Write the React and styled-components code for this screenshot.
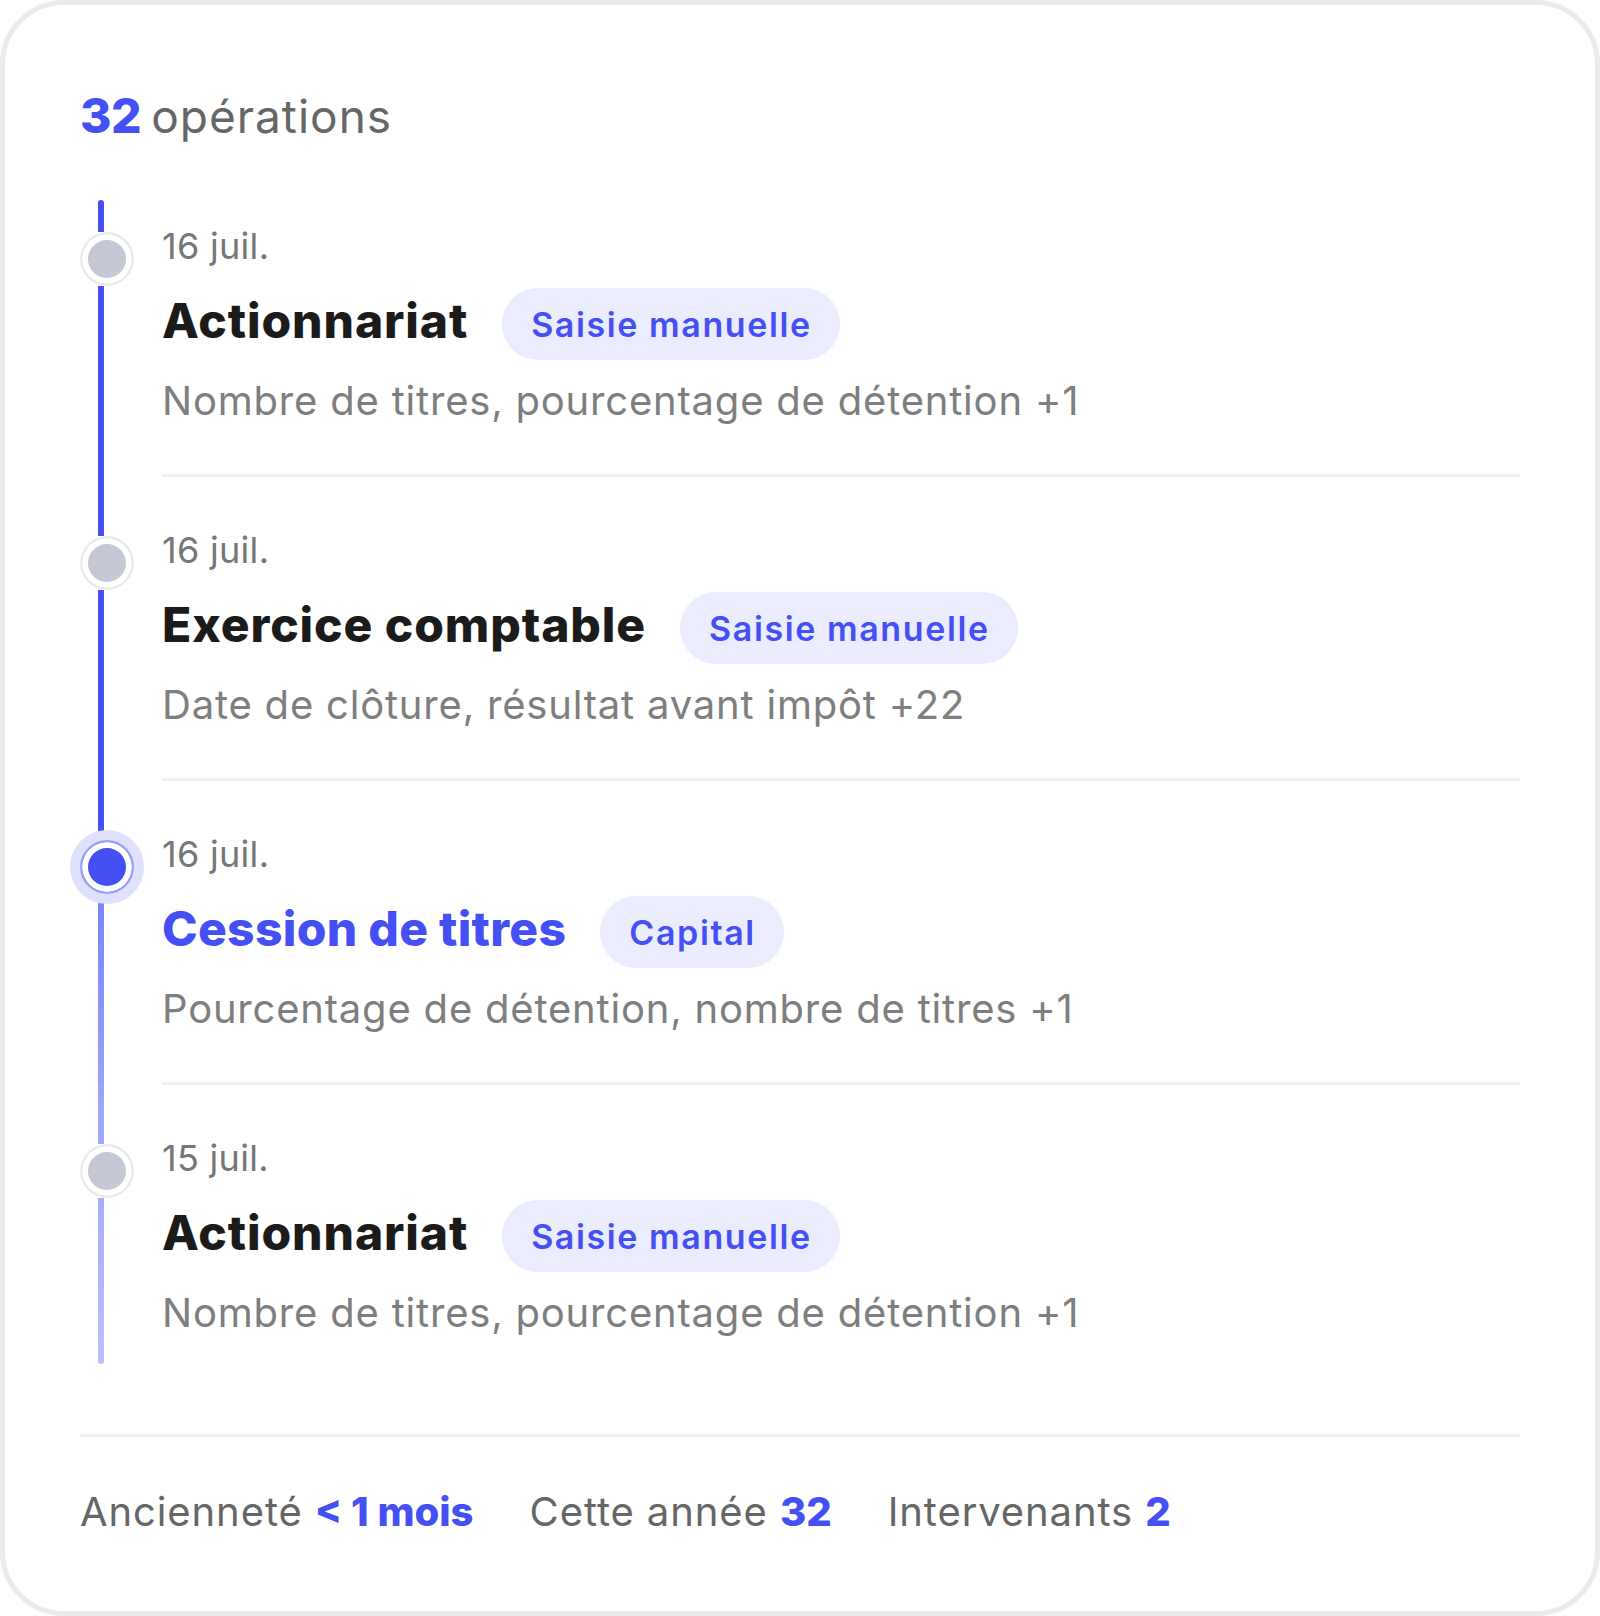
import React from "react";
import styled, { createGlobalStyle } from "styled-components";

const GlobalStyle = createGlobalStyle`
  * {
    box-sizing: border-box;
  }
  body {
    margin: 0;
    background: #ffffff;
    font-family: Inter, "Noto Sans", sans-serif;
  }
`;

const Card = styled.section`
  width: 1600px;
  height: 1616px;
  padding: 83px 75px 0 75px;
  border: 5px solid #eaebed;
  border-radius: 64px;
  background: #ffffff;
`;

const Heading = styled.h2`
  margin: 0;
  font-size: 46px;
  line-height: 56px;
  font-weight: 400;
  color: #666666;
  letter-spacing: 1px;
`;

const Count = styled.span`
  font-size: 48px;
  font-weight: 800;
  color: #4450f4;
  letter-spacing: -0.5px;
  margin-right: 10px;
`;

const Timeline = styled.div`
  margin-top: 56px;
`;

const Row = styled.div`
  display: grid;
  grid-template-columns: 82px 1fr;
`;

const Rail = styled.div`
  display: flex;
  flex-direction: column;
`;

const Segment = styled.div`
  width: 6px;
  margin-left: 18px;
  height: ${(p) => (p.$height ? `${p.$height}px` : "auto")};
  flex: ${(p) => (p.$height ? "none" : 1)};
  background: linear-gradient(${(p) => p.$from}, ${(p) => p.$to});
  border-radius: ${(p) =>
    p.$cap === "top" ? "3px 3px 0 0" : p.$cap === "bottom" ? "0 0 3px 3px" : "0"};
`;

const Dot = styled.div`
  width: 54px;
  height: 54px;
  flex: none;
  border-radius: 50%;
  background: ${(p) => (p.$active ? "#4450f4" : "#c6c8d3")};
  border: 2px solid ${(p) => (p.$active ? "#9ba2f8" : "#ececef")};
  box-shadow: inset 0 0 0 6px #ffffff
    ${(p) => (p.$active ? ", 0 0 0 10px #dfe1fd" : "")};
  position: relative;
  z-index: 1;
`;

const Content = styled.div`
  padding-top: ${(p) => p.$pad}px;
  padding-bottom: ${(p) => (p.$last ? 27 : 49)}px;
  border-bottom: ${(p) => (p.$last ? "none" : "3px solid #f0f0f1")};
`;

const DateLabel = styled.div`
  font-size: 36px;
  line-height: 44px;
  color: #767676;
  letter-spacing: 0.3px;
`;

const TitleRow = styled.div`
  display: flex;
  align-items: center;
  height: 72px;
  margin-top: 20px;
  gap: 34px;
`;

const Title = styled.div`
  font-size: 48px;
  line-height: 56px;
  font-weight: 800;
  color: ${(p) => (p.$active ? "#4450f4" : "#1b1b1b")};
  letter-spacing: ${(p) => (p.$active ? 0.3 : 0.9)}px;
  padding-bottom: 6px;
`;

const Pill = styled.span`
  display: inline-flex;
  align-items: center;
  height: 72px;
  padding: 0 28px 0 29px;
  border-radius: 36px;
  background: #ebecfe;
  color: #4450f4;
  font-size: 34px;
  font-weight: 600;
  letter-spacing: 1.6px;
`;

const Detail = styled.div`
  margin-top: 17px;
  font-size: 40px;
  line-height: 48px;
  color: #7e7e7e;
  letter-spacing: 0.8px;
`;

const Footer = styled.div`
  margin-top: 70px;
  border-top: 3px solid #f0f0f1;
  padding-top: 51px;
  display: flex;
  gap: 56px;
  font-size: 40px;
  line-height: 48px;
  color: #666666;
  letter-spacing: 0.9px;
`;

const Stat = styled.div`
  white-space: nowrap;
`;

const StatValue = styled.span`
  font-weight: 800;
  color: #4450f4;
  letter-spacing: 0;
`;

const BLUE = "#4450f4";

const operations = [
  {
    date: "16 juil.",
    title: "Actionnariat",
    tag: "Saisie manuelle",
    detail: "Nombre de titres, pourcentage de détention +1",
    line: [BLUE, BLUE, BLUE, BLUE],
  },
  {
    date: "16 juil.",
    title: "Exercice comptable",
    tag: "Saisie manuelle",
    detail: "Date de clôture, résultat avant impôt +22",
    line: [BLUE, BLUE, BLUE, BLUE],
  },
  {
    date: "16 juil.",
    title: "Cession de titres",
    tag: "Capital",
    detail: "Pourcentage de détention, nombre de titres +1",
    active: true,
    line: [BLUE, BLUE, "#7a84f6", "#9aa1f8"],
  },
  {
    date: "15 juil.",
    title: "Actionnariat",
    tag: "Saisie manuelle",
    detail: "Nombre de titres, pourcentage de détention +1",
    line: ["#9ca3f8", "#a2a8f9", "#a6acf9", "#bcc0fb"],
  },
];

export default function App() {
  return (
    <>
      <GlobalStyle />
      <Card>
        <Heading>
          <Count>32</Count>opérations
        </Heading>
        <Timeline>
          {operations.map((op, i) => {
            const first = i === 0;
            const last = i === operations.length - 1;
            const pad = first ? 24 : 51;
            return (
              <Row key={i}>
                <Rail>
                  <Segment
                    $height={pad + 8}
                    $from={op.line[0]}
                    $to={op.line[1]}
                    $cap={first ? "top" : ""}
                  />
                  <Dot $active={op.active} />
                  <Segment
                    $from={op.line[2]}
                    $to={op.line[3]}
                    $cap={last ? "bottom" : ""}
                  />
                </Rail>
                <Content $pad={pad} $last={last}>
                  <DateLabel>{op.date}</DateLabel>
                  <TitleRow>
                    <Title $active={op.active}>{op.title}</Title>
                    <Pill>{op.tag}</Pill>
                  </TitleRow>
                  <Detail>{op.detail}</Detail>
                </Content>
              </Row>
            );
          })}
        </Timeline>
        <Footer>
          <Stat>
            Ancienneté <StatValue>&lt; 1 mois</StatValue>
          </Stat>
          <Stat>
            Cette année <StatValue>32</StatValue>
          </Stat>
          <Stat>
            Intervenants <StatValue>2</StatValue>
          </Stat>
        </Footer>
      </Card>
    </>
  );
}
